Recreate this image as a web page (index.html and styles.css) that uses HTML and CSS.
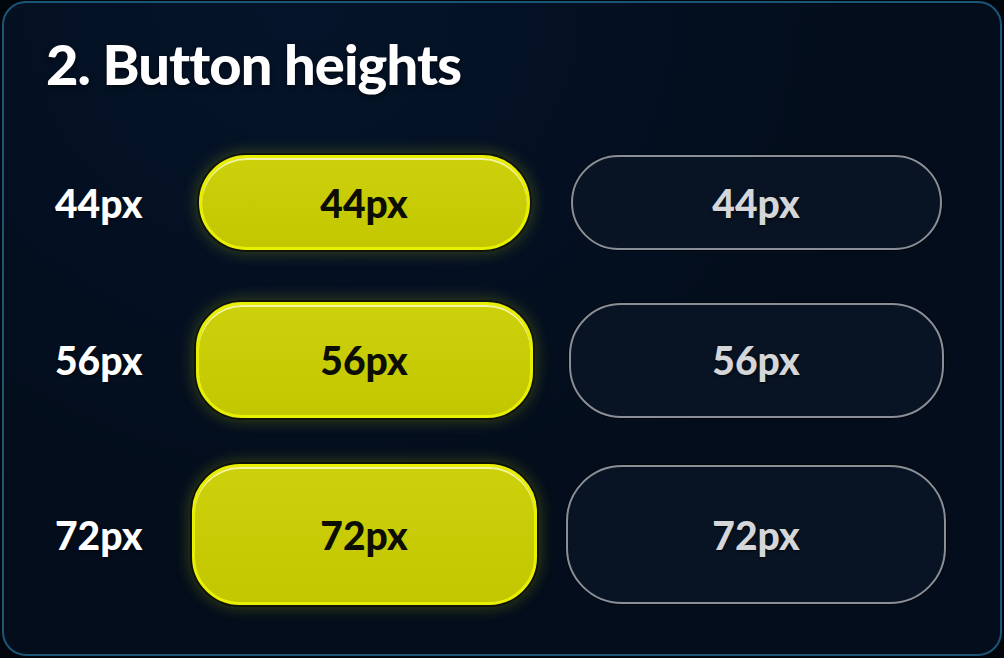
FILE: index.html
```html
<!DOCTYPE html>
<html>
<head>
	<title>Button heights</title>
<link rel="stylesheet" href="styles.css">
</head>
<body>

<div class="card">
	<h2 class="cardTitle">2. Button heights</h2>

	<div class="sizeRow row44">
		<div class="sizeLabel">44px</div>
		<div class="btn btnPrimary">44px</div>
		<div class="btn btnOutline">44px</div>
	</div>

	<div class="sizeRow row56">
		<div class="sizeLabel">56px</div>
		<div class="btn btnPrimary">56px</div>
		<div class="btn btnOutline">56px</div>
	</div>

	<div class="sizeRow row72">
		<div class="sizeLabel">72px</div>
		<div class="btn btnPrimary">72px</div>
		<div class="btn btnOutline">72px</div>
	</div>
</div>

</body>
</html>
```

FILE: styles.css
```css
html, body {
	margin: 0;
	padding: 0;
	background-color: #01060d;
}
body {
	font-family: Lato, "Noto Sans", sans-serif;
	padding: 1px 2px 2px 2px;
}
.card {
	box-sizing: border-box;
	height: 655px;
	border: 2px solid #1b5676;
	border-radius: 24px;
	background-color: #030d1b;
	background-image: radial-gradient(ellipse at 30% 0%, #05142a 0%, #030d1b 60%);
	padding: 27px 0 0 42px;
}
.cardTitle {
	margin: 0 0 58px 0;
	font-size: 56px;
	font-weight: 900;
	line-height: 1.2;
	letter-spacing: -0.9px;
	color: #ffffff;
	text-shadow: 0 2px 4px rgba(0,0,0,0.6);
}
.sizeRow {
	display: grid;
	grid-template-columns: 134px 368px 416px;
	align-items: center;
	justify-items: center;
}
.row56 { margin-top: 52px; }
.row72 { margin-top: 46px; }
.sizeLabel {
	justify-self: start;
	padding-left: 9px;
	font-size: 39px;
	font-weight: 900;
	color: #ffffff;
	text-shadow: 0 1px 3px rgba(0,0,0,0.7);
}
.btn {
	box-sizing: border-box;
	display: flex;
	align-items: center;
	justify-content: center;
	font-size: 39px;
	font-weight: 900;
}
.btnPrimary {
	background-color: #c6ca02;
	background-image: linear-gradient(180deg, #cdd10c 0%, #c3c700 100%);
	border: 3px solid #e8f000;
	color: #0c0e04;
	box-shadow: inset 0 2px 0 rgba(255,255,220,0.75), 0 0 0 2px rgba(0,0,0,0.55), 0 0 16px 2px rgba(210,220,0,0.28);
}
.btnOutline {
	background-color: #081424;
	border: 2px solid #8a8e96;
	color: #d4d6da;
	text-shadow: 0 1px 3px rgba(0,0,0,0.8);
	box-shadow: 0 0 0 1px rgba(0,0,0,0.5);
}
.row44 .btnPrimary { width: 331px; height: 95px; border-radius: 48px; }
.row44 .btnOutline { width: 371px; height: 95px; border-radius: 48px; }
.row56 .btnPrimary { width: 337px; height: 116px; border-radius: 46px; }
.row56 .btnOutline { width: 375px; height: 115px; border-radius: 52px; }
.row72 .btnPrimary { width: 345px; height: 141px; border-radius: 48px; }
.row72 .btnOutline { width: 380px; height: 139px; border-radius: 56px; }
```
